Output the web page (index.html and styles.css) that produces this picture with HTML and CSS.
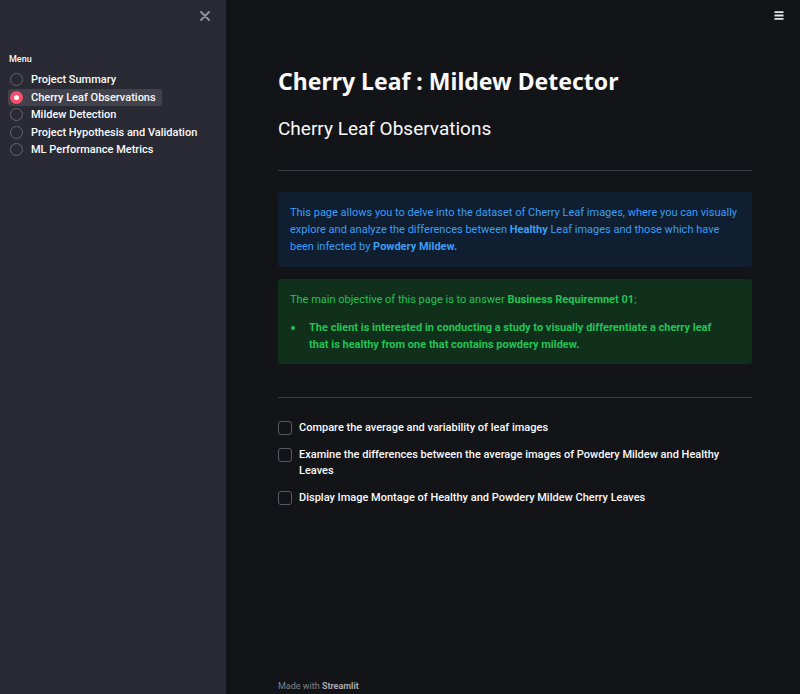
FILE: index.html
```html
<!DOCTYPE html>
<html>
<head>
<meta charset="utf-8">
<link rel="stylesheet" href="styles.css">
</head>
<body>
<div class="app">
  <aside class="sidebar">
    <div class="close-row">
      <svg class="close" width="10" height="10" viewBox="0 0 10 10"><path d="M1 1L9 9M9 1L1 9" stroke="#8e8f96" stroke-width="2" stroke-linecap="round"/></svg>
    </div>
    <div class="menu-label">Menu</div>
    <div class="radios">
      <div class="radio"><span class="dot"></span><span>Project Summary</span></div>
      <div class="radio selected"><span class="dot"></span><span>Cherry Leaf Observations</span></div>
      <div class="radio"><span class="dot"></span><span>Mildew Detection</span></div>
      <div class="radio"><span class="dot"></span><span>Project Hypothesis and Validation</span></div>
      <div class="radio"><span class="dot"></span><span>ML Performance Metrics</span></div>
    </div>
  </aside>
  <main class="main">
    <div class="topbar">
      <svg width="10" height="9" viewBox="0 0 10 9"><path d="M0.5 1.2H9.5M0.5 4.5H9.5M0.5 7.8H9.5" stroke="#e6e6e8" stroke-width="1.8"/></svg>
    </div>
    <div class="content">
      <h1 class="title">Cherry Leaf : Mildew Detector</h1>
      <h2 class="subtitle">Cherry Leaf Observations</h2>
      <hr class="rule">
      <div class="alert info">This page allows you to delve into the dataset of Cherry Leaf images, where you can visually explore and analyze the differences between <b>Healthy</b> Leaf images and those which have been infected by <b>Powdery Mildew.</b></div>
      <div class="alert success">
        <p>The main objective of this page is to answer <b>Business Requiremnet 01</b>;</p>
        <ul><li><b>The client is interested in conducting a study to visually differentiate a cherry leaf that is healthy from one that contains powdery mildew.</b></li></ul>
      </div>
      <hr class="rule rule2">
      <div class="checks">
        <label class="check"><span class="box"></span><span>Compare the average and variability of leaf images</span></label>
        <label class="check"><span class="box"></span><span>Examine the differences between the average images of Powdery Mildew and Healthy Leaves</span></label>
        <label class="check"><span class="box"></span><span>Display Image Montage of Healthy and Powdery Mildew Cherry Leaves</span></label>
      </div>
    </div>
    <footer class="footer">Made with <b>Streamlit</b></footer>
  </main>
</div>
</body>
</html>
```
FILE: styles.css
```css
html, body {
  margin: 0;
  padding: 0;
  height: 100%;
}
body {
  font-family: Roboto, "Noto Sans", sans-serif;
  background: #131418;
  color: #fafafa;
}
.app {
  display: flex;
  height: 694px;
}
.sidebar {
  width: 226px;
  flex: none;
  background: #292a33;
  box-sizing: border-box;
  padding: 10px 8px 0 8px;
}
.close-row {
  display: flex;
  justify-content: flex-end;
  padding-right: 8px;
  height: 40px;
}
.close {
  margin-top: 1px;
}
.menu-label {
  font-size: 9px;
  font-weight: 500;
  color: #fafafa;
  padding-left: 1px;
  margin-bottom: 7px;
  margin-top: 4px;
}
.radios {
  display: flex;
  flex-direction: column;
  align-items: flex-start;
}
.radio {
  display: flex;
  align-items: center;
  gap: 8px;
  height: 17.5px;
  font-size: 11px;
  font-weight: 500;
  padding: 0 6px 0 2px;
  border-radius: 3px;
  color: #fafafa;
  white-space: nowrap;
}
.radio.selected {
  background: #41424b;
}
.dot {
  width: 13px;
  height: 13px;
  box-sizing: border-box;
  border-radius: 50%;
  border: 1.5px solid #64656c;
  flex: none;
}
.radio.selected .dot {
  background: #ff4b6b;
  border: none;
  position: relative;
}
.radio.selected .dot::after {
  content: "";
  position: absolute;
  width: 5px;
  height: 5px;
  border-radius: 50%;
  background: #fff;
  left: 4px;
  top: 4px;
}
.main {
  flex: 1;
  position: relative;
  display: flex;
  flex-direction: column;
}
.topbar {
  display: flex;
  justify-content: flex-end;
  padding: 11px 16px 0 0;
  height: 20px;
}
.content {
  width: 474px;
  margin-left: 52px;
  flex: 1;
}
.title {
  font-family: "Noto Sans", sans-serif;
  font-size: 23px;
  font-weight: 700;
  margin: 35px 0 0 0;
  line-height: 30px;
  letter-spacing: 0;
}
.subtitle {
  font-size: 19px;
  font-weight: 400;
  margin: 20px 0 0 0;
  line-height: 26px;
}
.rule {
  border: none;
  border-top: 1px solid #3a3b42;
  margin: 28px 0 0 0;
}
.rule2 {
  margin-top: 33px;
}
.alert {
  border-radius: 3px;
  padding: 12px 12px;
  font-size: 11px;
  line-height: 17px;
}
.info {
  margin-top: 21px;
  background: #0f1f31;
  color: #3d9df3;
}
.success {
  margin-top: 12px;
  background: #10301c;
  color: #21c354;
  padding-bottom: 11px;
}
.success p {
  margin: 0;
}
.success ul {
  margin: 11px 0 0 0;
  padding: 0 16px 0 19px;
  list-style: none;
}
.success li {
  position: relative;
}
.success li::before {
  content: "";
  position: absolute;
  left: -18px;
  top: 7px;
  width: 4px;
  height: 4px;
  border-radius: 50%;
  background: #21c354;
}
.alert b {
  font-weight: 700;
}
.checks {
  margin-top: 22px;
  display: flex;
  flex-direction: column;
  gap: 11px;
}
.check {
  display: flex;
  align-items: flex-start;
  gap: 7px;
  font-size: 11px;
  line-height: 16px;
  font-weight: 500;
  padding-right: 30px;
}
.box {
  width: 14px;
  height: 14px;
  box-sizing: border-box;
  border: 1.5px solid #5a5b62;
  border-radius: 3px;
  flex: none;
  margin-top: 1px;
}
.footer {
  margin-left: 52px;
  font-size: 9px;
  color: #80818a;
  padding-bottom: 3px;
}
.footer b {
  color: #b0b1b8;
  font-weight: 600;
}
```
